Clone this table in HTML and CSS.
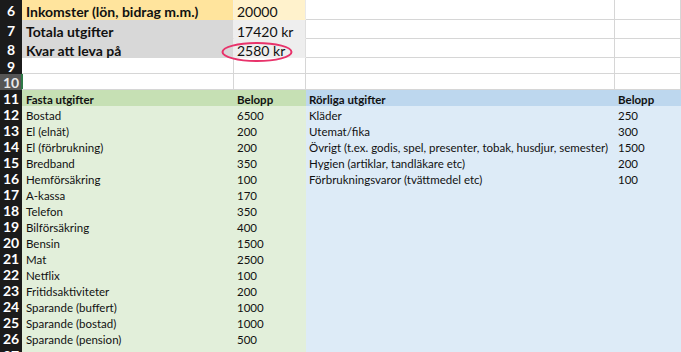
FILE: index.html
```html
<!DOCTYPE html>
<html lang="sv">
<head>
<meta charset="utf-8">
<title>Budget</title>
<link rel="stylesheet" href="styles.css">
</head>
<body>
<div class="sheet">
  <div class="rh">6</div><div class="c big b yel">Inkomster (lön, bidrag m.m.)</div><div class="c big yel-l">20000</div><div class="c"></div><div class="c"></div>
  <div class="rh">7</div><div class="c big b gry">Totala utgifter</div><div class="c big gry-l">17420 kr</div><div class="c"></div><div class="c"></div>
  <div class="rh">8</div><div class="c big b gry">Kvar att leva på</div><div class="c big gry-l">2580 kr</div><div class="c"></div><div class="c"></div>
  <div class="rh">9</div><div class="c"></div><div class="c"></div><div class="c"></div><div class="c"></div>
  <div class="rh sel">10</div><div class="c act"></div><div class="c"></div><div class="c"></div><div class="c"></div>
  <div class="rh">11</div><div class="c b gh">Fasta utgifter</div><div class="c b gh">Belopp</div><div class="c b bh">Rörliga utgifter</div><div class="c b bh">Belopp</div>
  <div class="rh">12</div><div class="c g">Bostad</div><div class="c g">6500</div><div class="c bl">Kläder</div><div class="c bl">250</div>
  <div class="rh">13</div><div class="c g">El (elnät)</div><div class="c g">200</div><div class="c bl">Utemat/fika</div><div class="c bl">300</div>
  <div class="rh">14</div><div class="c g">El (förbrukning)</div><div class="c g">200</div><div class="c bl">Övrigt (t.ex. godis, spel, presenter, tobak, husdjur, semester)</div><div class="c bl">1500</div>
  <div class="rh">15</div><div class="c g">Bredband</div><div class="c g">350</div><div class="c bl">Hygien (artiklar, tandläkare etc)</div><div class="c bl">200</div>
  <div class="rh">16</div><div class="c g">Hemförsäkring</div><div class="c g">100</div><div class="c bl">Förbrukningsvaror (tvättmedel etc)</div><div class="c bl">100</div>
  <div class="rh">17</div><div class="c g">A-kassa</div><div class="c g">170</div><div class="c bl"></div><div class="c bl"></div>
  <div class="rh">18</div><div class="c g">Telefon</div><div class="c g">350</div><div class="c bl"></div><div class="c bl"></div>
  <div class="rh">19</div><div class="c g">Bilförsäkring</div><div class="c g">400</div><div class="c bl"></div><div class="c bl"></div>
  <div class="rh">20</div><div class="c g">Bensin</div><div class="c g">1500</div><div class="c bl"></div><div class="c bl"></div>
  <div class="rh">21</div><div class="c g">Mat</div><div class="c g">2500</div><div class="c bl"></div><div class="c bl"></div>
  <div class="rh">22</div><div class="c g">Netflix</div><div class="c g">100</div><div class="c bl"></div><div class="c bl"></div>
  <div class="rh">23</div><div class="c g">Fritidsaktiviteter</div><div class="c g">200</div><div class="c bl"></div><div class="c bl"></div>
  <div class="rh">24</div><div class="c g">Sparande (buffert)</div><div class="c g">1000</div><div class="c bl"></div><div class="c bl"></div>
  <div class="rh">25</div><div class="c g">Sparande (bostad)</div><div class="c g">1000</div><div class="c bl"></div><div class="c bl"></div>
  <div class="rh">26</div><div class="c g">Sparande (pension)</div><div class="c g">500</div><div class="c bl"></div><div class="c bl"></div>
  <div class="rh r27">27</div><div class="c g"></div><div class="c g"></div><div class="c bl"></div><div class="c bl"></div>
  <svg class="ring" width="74" height="22" viewBox="0 0 74 22"><ellipse cx="37" cy="11" rx="34.5" ry="9" fill="none" stroke="#E8336B" stroke-width="2"/></svg>
</div>
</body>
</html>
```

FILE: styles.css
```css
html, body {
  margin: 0;
  padding: 0;
  background: #ffffff;
  overflow: hidden;
}

.sheet {
  position: relative;
  display: grid;
  grid-template-columns: 22px 212px 72px 309px 66px;
  grid-template-rows: 20px 19px 19px 16px 16px repeat(16, 16px) 6px;
  width: 681px;
  height: 352px;
  overflow: hidden;
  font-family: "Lato", "Liberation Sans", sans-serif;
  font-size: 11.5px;
  color: #111;
}

.rh {
  background: #1b1b1b;
  color: #ffffff;
  font-weight: 700;
  font-size: 14px;
  display: flex;
  align-items: center;
  justify-content: center;
  padding-top: 1px;
  box-sizing: border-box;
  overflow: hidden;
}

.rh.sel {
  background: #555555;
  color: #e8e8e8;
  box-shadow: inset -1px 0 0 #2f7a48;
}

.rh.r27 {
  align-items: flex-start;
  line-height: 16px;
  padding-top: 2px;
}

.c {
  box-sizing: border-box;
  border-right: 1px solid #d6d6d6;
  border-bottom: 1px solid #d6d6d6;
  padding-left: 3px;
  padding-top: 3px;
  display: flex;
  align-items: center;
  white-space: nowrap;
  overflow: visible;
}

.c.b { font-weight: 700; }
.c.big { font-size: 14px; padding-top: 4px; }

.yel { background: #ffe49d; border-color: #ffe49d; border-right-color: #f6f0e0; padding-left: 4px; }
.yel-l { background: #fff2cc; border-color: #fff2cc; border-right-color: #e9e9e9; }
.gry { background: #d8d8d8; border-color: #d8d8d8; border-right-color: #eeeeee; padding-left: 4px; }
.gry-l { background: #eeeeee; border-color: #eeeeee; border-right-color: #dedede; }

.act { box-shadow: inset 1px 0 0 #2f7a48; }

.gh { background: #c6e0b4; border-color: #c6e0b4; padding-left: 4px; }
.gh + .gh { padding-left: 3px; }
.bh { background: #bdd7ee; border-color: #bdd7ee; }
.g { background: #e2efda; border-color: #e2efda; padding-left: 4px; }
.g + .g { padding-left: 3px; }
.bl { background: #ddebf7; border-color: #ddebf7; }

.ring {
  position: absolute;
  left: 220px;
  top: 41px;
  pointer-events: none;
}
```
